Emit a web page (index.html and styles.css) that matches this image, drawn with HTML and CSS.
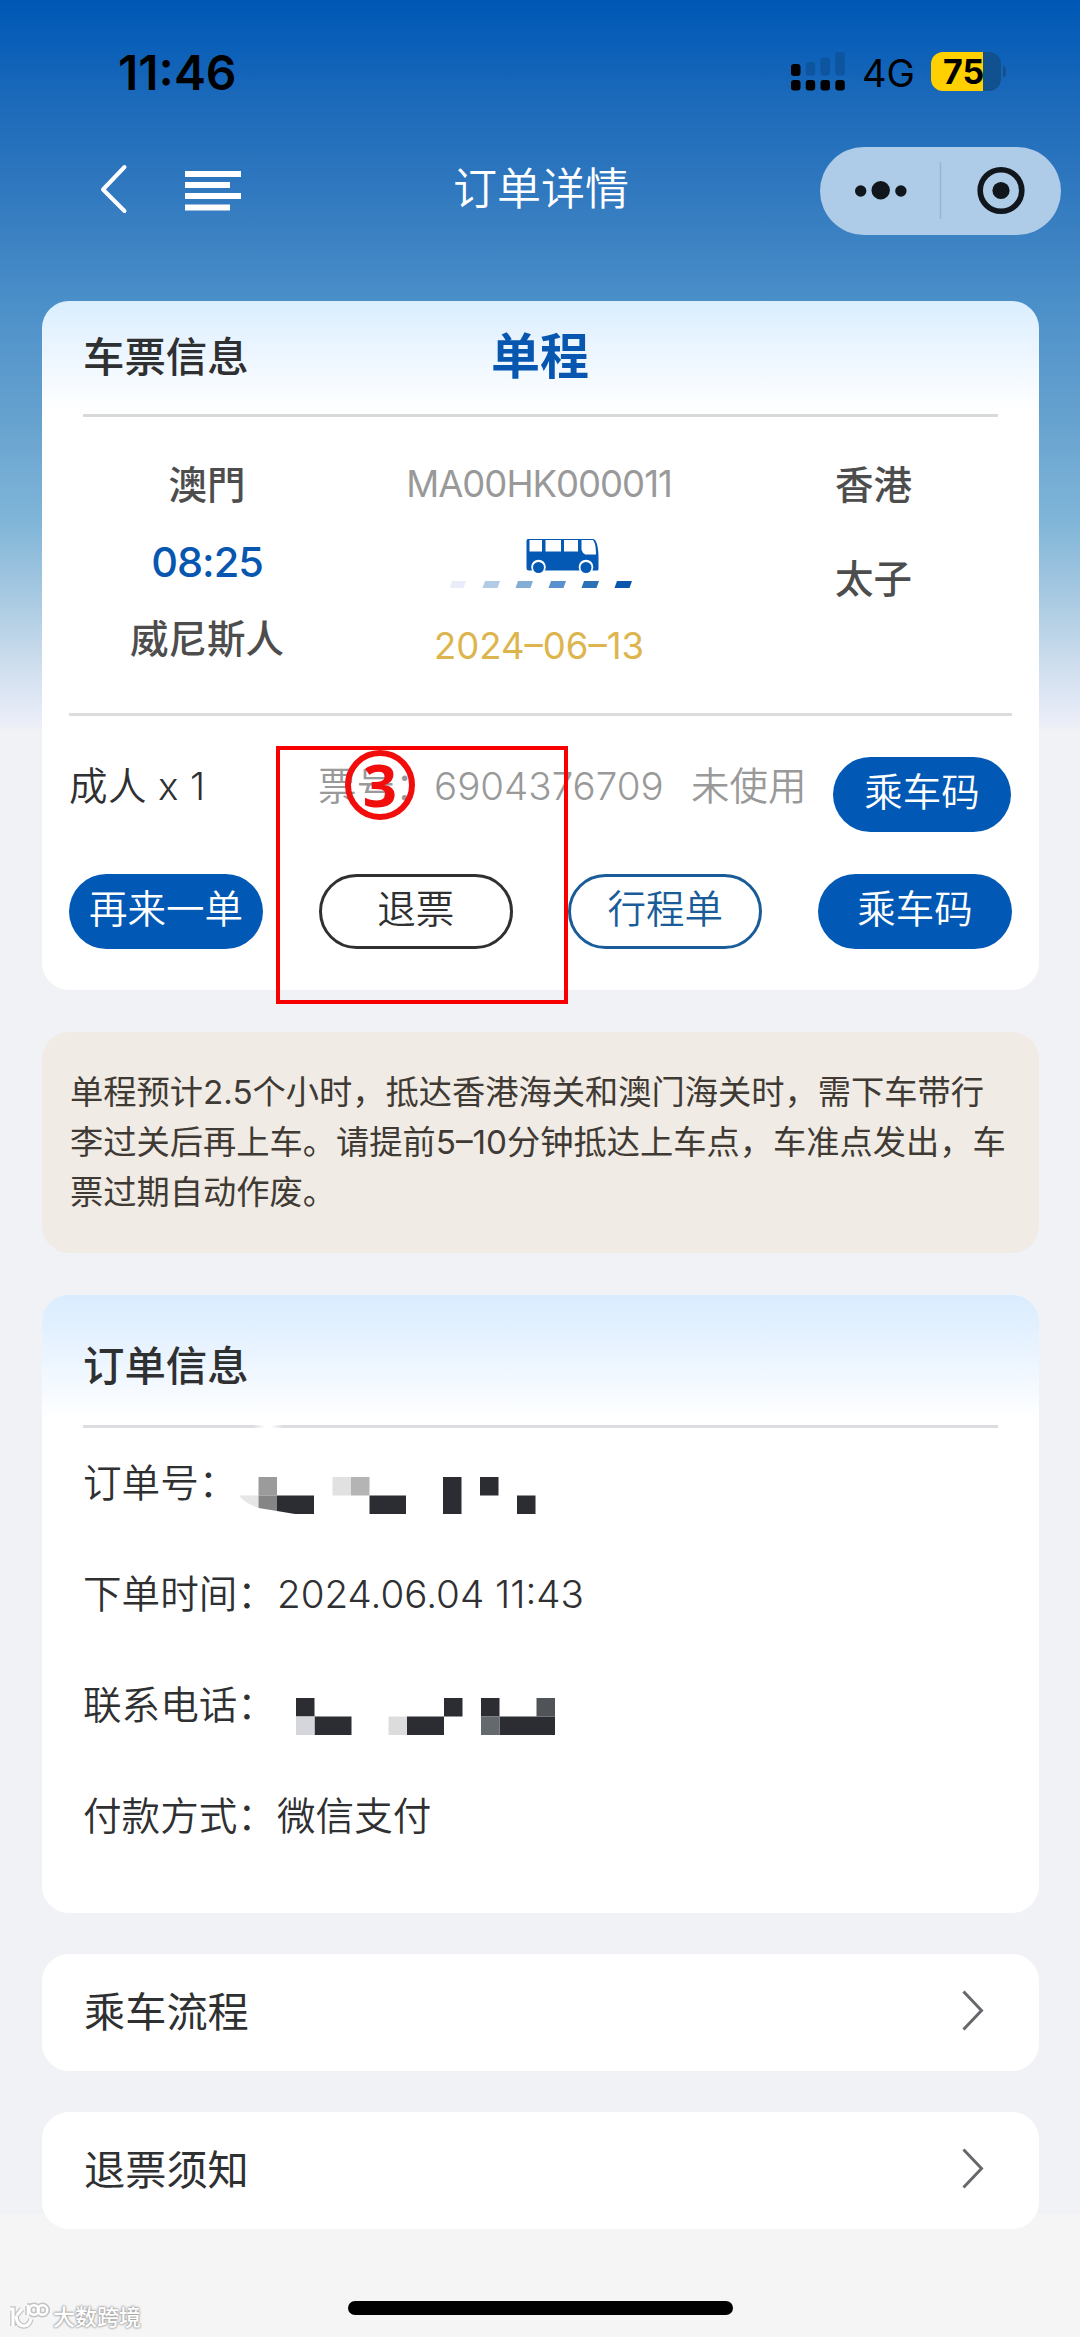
FILE: index.html
```html
<!DOCTYPE html>
<html lang="zh-CN">
<head>
<meta charset="utf-8">
<title>订单详情</title>
<link rel="stylesheet" href="styles.css">
</head>
<body>
<div class="screen">
  <header class="status">
    <span class="clock">11:46</span>
    <div class="status-right">
      <svg class="signal" width="54" height="39" viewBox="0 0 54 39">
        <g fill="#000"><rect y="12" width="9.5" height="12" rx="3"/><rect y="28" width="9.5" height="10.5" rx="3"/><rect x="14.7" y="28" width="9.5" height="10.5" rx="3"/><rect x="29.5" y="28" width="9.5" height="10.5" rx="3"/><rect x="44.3" y="28" width="9.5" height="10.5" rx="3"/></g>
        <g fill="#0d559f"><rect x="14.7" y="10" width="9.5" height="13.5" rx="3"/><rect x="29.5" y="5.5" width="9.5" height="18" rx="3"/><rect x="44.3" y="0" width="9.5" height="23.5" rx="3"/></g>
      </svg>
      <span class="network">4G</span>
      <div class="battery"><span>75</span></div>
      <i class="battery-nub"></i>
    </div>
  </header>
  <nav class="nav">
    <svg class="back" width="28" height="52" viewBox="0 0 28 52"><path d="M24.500 4 3 26.500 24.500 48" fill="none" stroke="#fff" stroke-width="4" stroke-linecap="round" stroke-linejoin="round"/></svg>
    <svg class="menu" width="56" height="40" viewBox="0 0 56 40"><path d="M0 0h56v6H0zM0 11h45v6H0zM0 22h56v6H0zM0 33.500h45v6H0z" fill="#fff"/></svg>
    <h1 class="title">订单详情</h1>
    <div class="capsule">
      <svg width="241" height="88" viewBox="0 0 241 88">
        <g fill="#10161c"><circle cx="40.700" cy="44" r="5.700"/><circle cx="60.700" cy="43.300" r="9.200"/><circle cx="80.900" cy="44" r="5.700"/><circle cx="181" cy="43.500" r="8.600"/></g>
        <path d="M120.500 15v57" stroke="#94b5d3" stroke-width="1.500"/>
        <circle cx="181" cy="43.500" r="20.800" fill="none" stroke="#10161c" stroke-width="5.600"/>
      </svg>
    </div>
  </nav>

  <main class="content">
    <section class="card ticket">
      <div class="card-head">
        <h2>车票信息</h2>
        <strong class="trip-type">单程</strong>
      </div>
      <div class="route">
        <div class="stop">
          <span>澳門</span>
          <span class="depart">08:25</span>
          <span>威尼斯人</span>
        </div>
        <div class="trip">
          <span class="trip-code">MA00HK000011</span>
          <svg class="bus" width="184" height="50" viewBox="0 0 184 50">
            <path d="M79 0h65c4 0 5.500 10 5.500 19v11q0 1.500-1.500 1.500H80q-2.500 0-2.500-2.500V2q0-2 1.500-2z" fill="#0459b5"/>
            <g fill="#fff"><path d="M80.500 1h12.500v11.500H80.500zM96.500 1H112v11.500H96.500zM115 1h14v11.500h-14zM132.500 1h11.500c2.500 3 3 9 3 14.500H136.500q-3-1-4-5z"/><circle cx="89.500" cy="28" r="7.300"/><circle cx="137" cy="28" r="7.300"/></g>
            <g fill="#0459b5"><circle cx="89.500" cy="28.500" r="5.500"/><circle cx="137" cy="28.500" r="5.500"/></g>
            <path d="M3 42h14l-2.500 7H1z" fill="#eaedf9"/><path d="M36 42h15l-2.500 7H33.500z" fill="#b2cce7"/><path d="M69 42h15l-2.500 7H66.500z" fill="#82aed6"/><path d="M102 42h15l-2.500 7H99.500z" fill="#5a90cd"/><path d="M135 42h15l-2.500 7h-15z" fill="#2d70b6"/><path d="M168 42h15l-2.500 7h-15z" fill="#0b56ac"/>
          </svg>
          <span class="trip-date">2024–06–13</span>
        </div>
        <div class="stop stop-end">
          <span>香港</span>
          <span>太子</span>
        </div>
      </div>
      <div class="passenger">
        <span class="who">成人 x 1</span>
        <span class="ticket-label">票号：</span>
        <span class="ticket-no">6904376709</span>
        <span class="state">未使用</span>
        <button class="btn btn-solid btn-small">乘车码</button>
      </div>
      <div class="actions">
        <button class="btn btn-solid">再来一单</button>
        <button class="btn btn-dark">退票</button>
        <button class="btn btn-line">行程单</button>
        <button class="btn btn-solid">乘车码</button>
      </div>
      <div class="callout"></div>
      <div class="step">3</div>
    </section>

    <p class="notice">单程预计2.5个小时，抵达香港海关和澳门海关时，需下车带行<br>李过关后再上车。请提前5–10分钟抵达上车点，车准点发出，车<br>票过期自动作废。</p>

    <section class="card order">
      <div class="card-head order-head"><h2>订单信息</h2></div>
      <dl class="fields">
        <div><dt>订单号：</dt><dd>
          <svg class="mosaic mosaic-order" width="296" height="38" viewBox="0 0 296 38">
            <path d="M0 18.500h18.500V31Q7 27 0 20z" fill="#e6e6e6"/><path d="M18.500 0H37v18.500H18.500z" fill="#9b9b9b"/><path d="M18.500 18.500H37V34L18.500 31z" fill="#858585"/>
            <path d="M92.500 0H111v18.500H92.500z" fill="#e1e1e1"/><path d="M111 0h18.500v18.500H111z" fill="#b4b4b4"/>
            <path d="M37 18.500h37V37H55L37 34zM129.500 18.500H166V37h-36.500zM203 0h18.500v37H203zM240 0h18.500v18.500H240zM277 18.500h18.500V37H277z" fill="#2c2d33"/>
          </svg></dd></div>
        <div><dt>下单时间：</dt><dd>2024.06.04 11:43</dd></div>
        <div><dt>联系电话：</dt><dd>
          <svg class="mosaic mosaic-phone" width="259" height="38" viewBox="0 0 259 38">
            <path d="M0 0h18.500v18.500H0zM18.500 18.500h37V37h-37zM111 18.500h37V37h-37zM148 0h18.500v18.500H148zM185 0h18.500v18.500H185zM203.500 18.500H259V37h-55.500z" fill="#2b2d32"/>
            <path d="M0 18.500h18.500V37H0z" fill="#d5d6dc"/><path d="M92.500 18.500H111V37H92.500z" fill="#dcdcdc"/><path d="M185 18.500h18.500V37H185z" fill="#64696e"/><path d="M240.500 0H259v18.500h-18.500z" fill="#505358"/>
          </svg></dd></div>
        <div><dt>付款方式：</dt><dd>微信支付</dd></div>
      </dl>
    </section>

    <a class="card link"><span>乘车流程</span><svg width="24" height="44" viewBox="0 0 24 44"><path d="M2.500 2.500 20.500 21.500 2.500 40.500" fill="none" stroke="#66686c" stroke-width="3"/></svg></a>
    <a class="card link"><span>退票须知</span><svg width="24" height="44" viewBox="0 0 24 44"><path d="M2.500 2.500 20.500 21.500 2.500 40.500" fill="none" stroke="#66686c" stroke-width="3"/></svg></a>
  </main>

  <footer class="footer">
    <div class="watermark">
      <svg width="42" height="30" viewBox="0 0 42 30">
        <g fill="none" stroke="#c4c4c4" stroke-width="5.500"><path d="M2 7h3v17M14 7 9 13M8 14q1 10 8 10 5 0 7-7M19 4h1v9"/><circle cx="26" cy="8" r="4.800"/><circle cx="34.500" cy="8" r="4.800"/></g>
        <g fill="none" stroke="#fff" stroke-width="3"><path d="M2 7h3v17M14 7 9 13M8 14q1 10 8 10 5 0 7-7"/><path d="M19 4h1v9" stroke-width="2.500"/><g stroke-width="2.400"><circle cx="26" cy="8" r="4.800"/><circle cx="34.500" cy="8" r="4.800"/></g></g>
      </svg>
      <span>大数跨境</span>
    </div>
    <div class="home-bar"></div>
  </footer>
</div>
</body>
</html>
```

FILE: styles.css
```css
* { box-sizing: border-box; }
body, h1, h2, p, dl, dd { margin: 0; }
body {
  font-family: Inter, "Noto Sans CJK SC", sans-serif;
  background: #f5f5f5;
  color: #2f3032;
}
svg { display: block; flex: none; }

.screen {
  display: flex;
  flex-direction: column;
  width: 1080px;
  height: 2337px;
  overflow: hidden;
  background: linear-gradient(180deg, #0058b5 0, #0a5fb8 43px, #1b69ba 97px, #3179bf 193px, #4b8fc9 301px, #69a4d0 430px, #7fb5d8 520px, #a9cae2 600px, #d1dfee 670px, #e8ecf8 718px, #f1f2f6 732px, #f1f2f6 2214px, #f5f5f5 2214px);
}

.status {
  display: flex;
  justify-content: space-between;
  height: 147px;
  padding: 52px 74px 0 118px;
}
.clock {
  color: #000;
  font-size: 48px;
  font-weight: 600;
  line-height: 41px;
}
.status-right { display: flex; align-items: flex-start; }
.network {
  width: 69px;
  margin-left: 17px;
  color: #000;
  font-size: 38px;
  line-height: 43px;
}
.battery {
  width: 70px;
  height: 39px;
  border-radius: 12px;
  background: linear-gradient(90deg, #ffd000 52px, #11518f 52px);
  color: #000;
  font-size: 34px;
  font-weight: 700;
  line-height: 40px;
}
.battery span { margin-left: 12px; }
.battery-nub { width: 3px; height: 11px; margin: 14px 0 0 2px; border-radius: 0 3px 3px 0; background: #11518f; }

.nav {
  display: grid;
  grid-template-columns: 85px 268px 367px 241px;
  align-items: center;
  height: 88px;
  margin: 0 19px 66px 100px;
}
.back { margin-top: -4px; }
.menu { margin-top: -1px; }
.title {
  color: #fff;
  font-size: 44px;
  font-weight: 350;
  line-height: 84px;
  margin-top: -4px;
}
.capsule { height: 88px; border-radius: 44px; background: #aecbe7; }

.content { display: flex; flex-direction: column; padding: 0 41px 0 42px; }
.card { border-radius: 27px; background: #fff; }

.ticket {
  position: relative;
  height: 689px;
  margin-bottom: 42px;
  padding: 0 27px;
  background: linear-gradient(180deg, #daeefe 0, #eff7ff 60px, #fff 112px);
}
.card-head {
  display: flex;
  align-items: center;
  height: 116px;
  margin: 0 14px;
  padding-bottom: 2px;
  border-bottom: 3px solid #d9dadc;
}
.card-head h2 {
  width: 408px;
  font-size: 41.400px;
  font-weight: 500;
  line-height: 60px;
}
.trip-type { color: #0757b0; font-size: 49px; font-weight: 700; line-height: 60px; }

.route {
  display: grid;
  grid-template-columns: 276px 388px 1fr;
  height: 299px;
  border-bottom: 3px solid #dcdcdc;
}
.stop {
  display: flex;
  flex-direction: column;
  align-items: center;
  gap: 18px;
  padding-top: 38px;
  color: #4d4d4d;
  font-size: 38.500px;
  font-weight: 500;
  line-height: 60px;
}
.depart { color: #0757b0; font-size: 41.500px; line-height: 58px; letter-spacing: -1px; }
.stop-end { gap: 34px; padding-left: 2px; }
.trip { display: flex; flex-direction: column; align-items: center; }
.trip-code { margin-top: 37px; color: #999; font-size: 36.500px; line-height: 60px; letter-spacing: -1px; }
.bus { margin: 25px 0 27px 4px; }
.trip-date { color: #ddb54e; font-size: 36.500px; line-height: 60px; }

.passenger {
  display: flex;
  align-items: flex-start;
  height: 158px;
  padding-top: 41px;
  color: #999;
  font-size: 38.500px;
  font-weight: 350;
  line-height: 58px;
  white-space: nowrap;
}
.who { width: 249px; color: #2f3032; letter-spacing: .400px; }
.ticket-label { width: 116px; }
.ticket-no { width: 257px; font-size: 38.500px; }
.state { width: 142px; }

.btn {
  flex: none;
  width: 194px;
  height: 75px;
  margin: 0;
  padding: 0 0 4px;
  border: 0;
  border-radius: 38px;
  font: 350 38.500px/71px Inter, "Noto Sans CJK SC", sans-serif;
  white-space: nowrap;
}
.btn-solid { background: #0259b5; color: #fff; }
.btn-small { width: 178px; }
.btn-dark, .btn-line { border: 3px solid #2f3032; background: #fff; color: #2f3032; line-height: 65px; }
.btn-line { border-color: #1a5c99; color: #1a5c99; }
.actions { display: flex; justify-content: space-between; }

/* Marker drawn over the refund button */
.callout { position: absolute; left: 234px; top: 445px; width: 292px; height: 258px; border: 4.500px solid #f80000; }
.step {
  position: absolute;
  left: 303px;
  top: 449px;
  width: 70px;
  height: 70px;
  border: 6px solid #f20d0d;
  border-radius: 50%;
  color: #f20d0d;
  font: 700 60px/57px "Noto Sans", sans-serif;
  text-align: center;
}

.notice {
  height: 221px;
  margin-bottom: 42px;
  padding: 35px 28px;
  border-radius: 27px;
  background: #f1ebe5;
  color: #3f3a34;
  font-size: 33.250px;
  line-height: 50px;
  white-space: nowrap;
}

.order {
  height: 618px;
  margin-bottom: 41px;
  padding: 0 27px;
  background: linear-gradient(180deg, #d9ecfe 0, #ecf5ff 66px, #fff 125px);
}
.order-head {
  height: 133px;
  padding-top: 9px;
  padding-bottom: 0;
  border-bottom: 0;
  background: linear-gradient(90deg, #dcdde1 0 170px, transparent 182px 188px, #dcdde1 200px) bottom / 100% 3px no-repeat;
}
.fields { padding: 0 14px; font-size: 38.600px; font-weight: 350; }
.fields > div { display: flex; height: 111px; line-height: 111px; }
.fields dt { width: 194px; }
.mosaic { margin-top: 49px; }
.mosaic-order { margin-left: -37px; }
.mosaic-phone { margin: 48px 0 0 18.500px; }

.link {
  display: flex;
  align-items: center;
  justify-content: space-between;
  height: 117px;
  margin-bottom: 41px;
  padding: 0 54px 0 42px;
  font-size: 41.200px;
}
.link span { margin-top: -7px; }
.link svg { margin-top: -4px; }

.footer { position: relative; }
.home-bar { width: 385px; height: 14px; margin: 31px 0 0 348px; border-radius: 7px; background: #000; }
.watermark {
  position: absolute;
  left: 8px;
  top: 30px;
  display: flex;
  align-items: center;
  gap: 3px;
  color: #fff;
  font-size: 22px;
  font-weight: 500;
  line-height: 34px;
  text-shadow: 0 0 2px #999, 0 0 2px #999, 0 0 3px #bbb;
}
```
